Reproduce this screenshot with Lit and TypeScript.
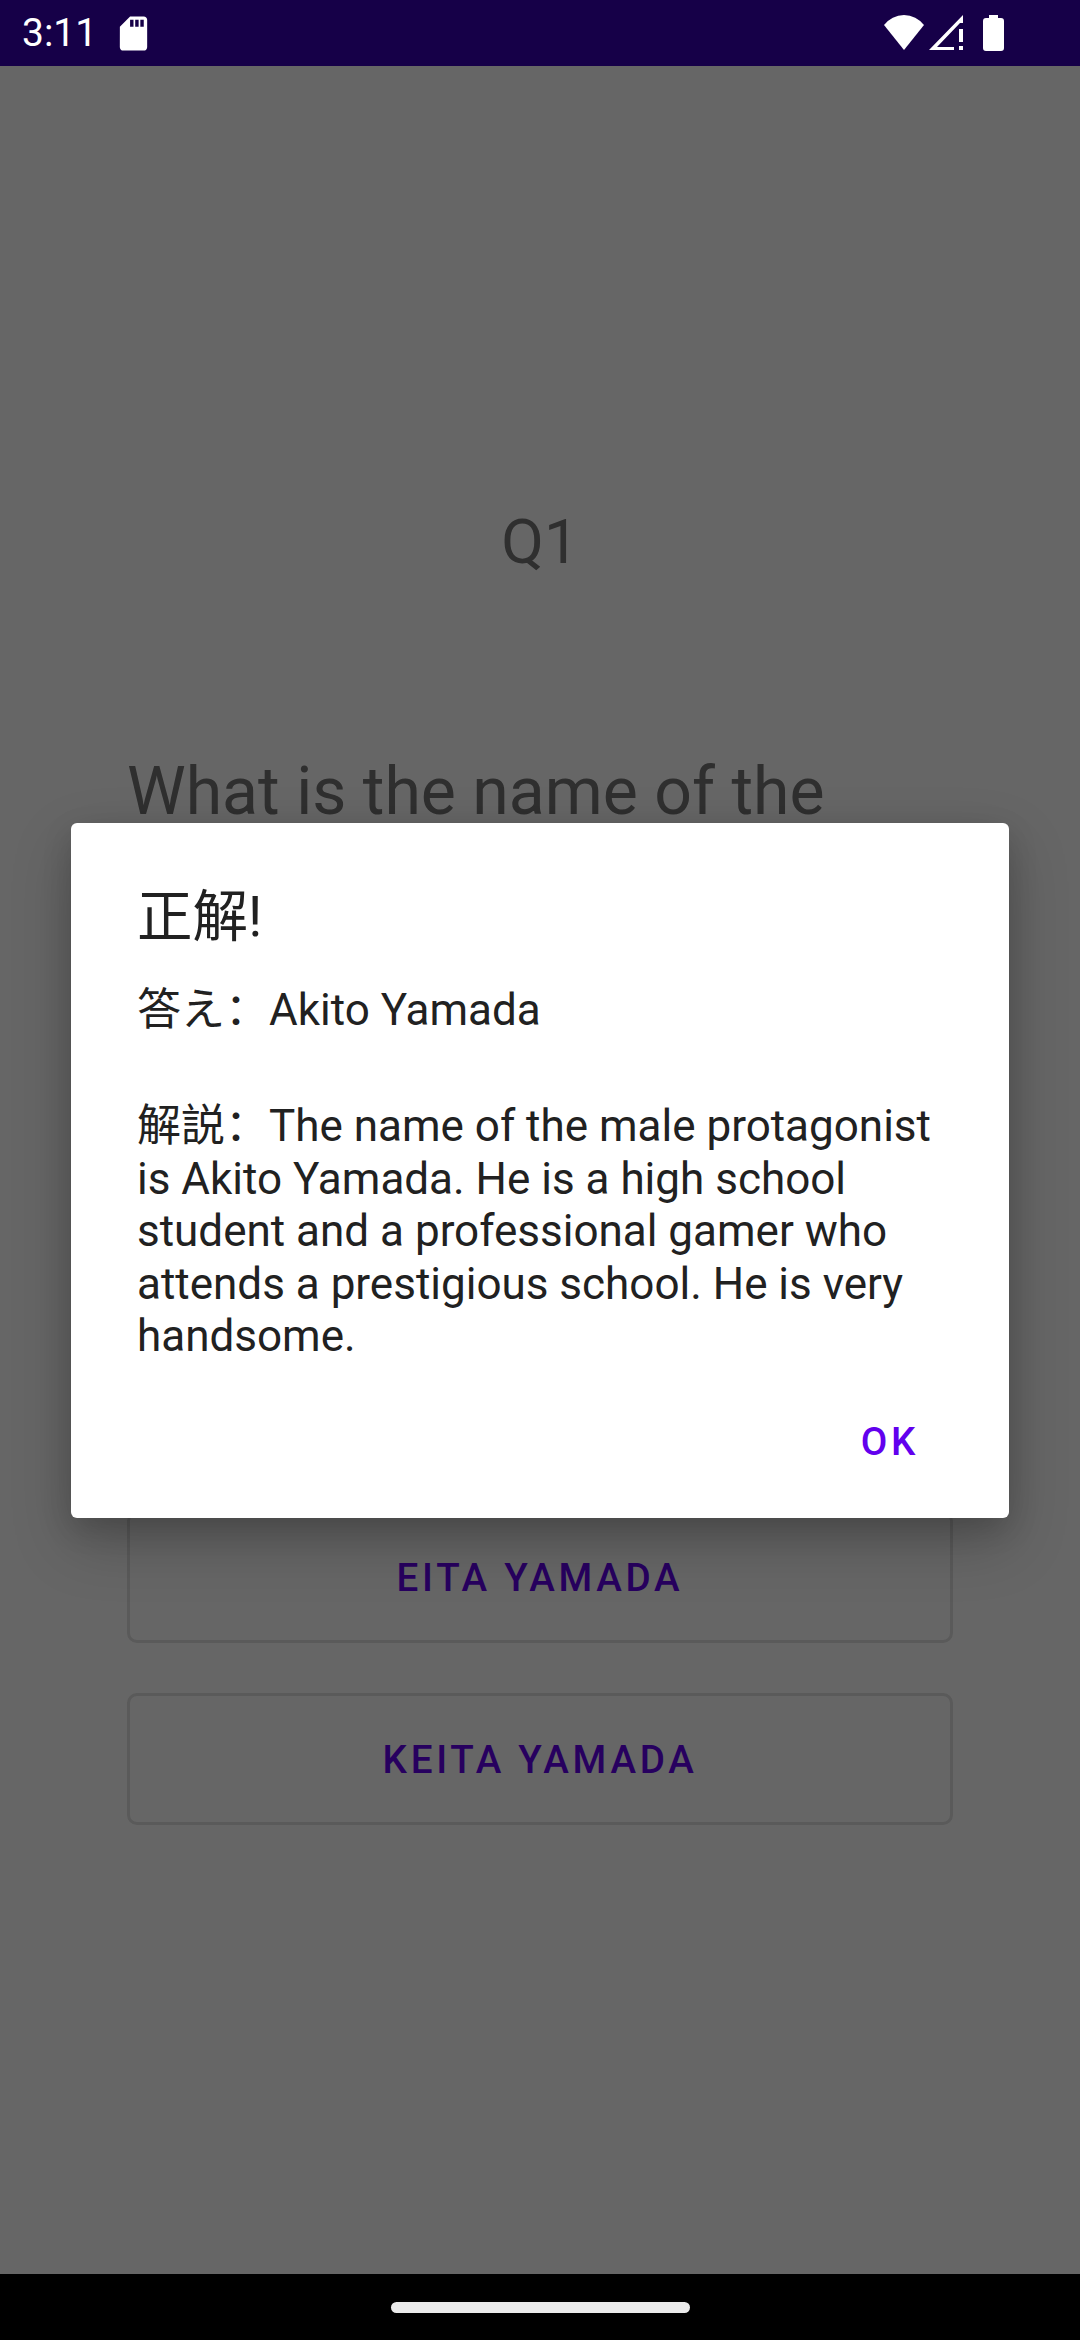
import {LitElement, html, css} from 'lit';
import {customElement} from 'lit/decorators.js';

@customElement('app-root')
export class AppRoot extends LitElement {
  static override styles = css`
    :host {
      display: block;
      font-family: Roboto, 'Noto Sans CJK SC', sans-serif;
    }
    .page {
      display: flex;
      flex-direction: column;
      width: 1080px;
      height: 2340px;
      background: #fff;
      overflow: hidden;
    }
    .status {
      display: flex;
      align-items: center;
      flex: 0 0 66px;
      height: 66px;
      padding: 0 0 0 22px;
      box-sizing: border-box;
      background: #160048;
      color: #fff;
    }
    .time {
      font-size: 39px;
      line-height: 66px;
      width: 91px;
    }
    .icons {
      display: flex;
      align-items: center;
      margin-left: auto;
      margin-right: 76px;
    }
    .status svg {
      display: block;
      fill: #fff;
    }
    .main {
      position: relative;
      flex: 1;
      display: flex;
      flex-direction: column;
      padding: 0 127px;
      min-height: 0;
    }
    .num {
      margin-top: 438px;
      text-align: center;
      font-size: 62px;
      line-height: 76px;
      color: #757575;
    }
    .question {
      margin-top: 166px;
      font-size: 66.15px;
      line-height: 92px;
      color: #757575;
    }
    .choices {
      display: flex;
      flex-direction: column;
      gap: 50px;
      margin-top: 217px;
    }
    .choice {
      display: flex;
      align-items: center;
      justify-content: center;
      height: 132px;
      box-sizing: border-box;
      border: 3px solid #e0e0e0;
      border-radius: 10px;
      font-size: 38.6px;
      font-weight: 500;
      letter-spacing: 3.7px;
      color: #6200ee;
    }
    .scrim {
      position: absolute;
      inset: 0;
      display: flex;
      align-items: center;
      justify-content: center;
      background: rgba(0, 0, 0, 0.6);
    }
    .dialog {
      width: 938px;
      height: 695px;
      box-sizing: border-box;
      padding: 64px 66px 0;
      background: #fff;
      border-radius: 6px;
      box-shadow: 0 24px 60px rgba(0, 0, 0, 0.22), 0 10px 30px rgba(0, 0, 0, 0.14);
      display: flex;
      flex-direction: column;
    }
    .title {
      font-size: 55.5px;
      line-height: 62px;
      color: #212121;
    }
    .answer {
      margin-top: 35px;
    }
    .answer,
    .note {
      font-size: 44px;
      line-height: 52.5px;
      color: #212121;
    }
    .note {
      margin-top: 64px;
    }
    .actions {
      display: flex;
      justify-content: flex-end;
      margin-top: auto;
      padding: 0 24px 54px 0;
    }
    .ok {
      font-size: 38.6px;
      font-weight: 500;
      letter-spacing: 3.7px;
      color: #6200ee;
    }
    .nav {
      display: flex;
      justify-content: center;
      align-items: center;
      flex: 0 0 66px;
      background: #000;
    }
    .pill {
      width: 299px;
      height: 11px;
      border-radius: 6px;
      background: #ebebeb;
    }
  `;

  private choices = ['AKITO YAMADA', 'SOTA YAMADA', 'EITA YAMADA', 'KEITA YAMADA'];

  override render() {
    return html`
      <div class="page">
        <div class="status">
          <span class="time">3:11</span>
          <svg width="41" height="41" viewBox="0 0 24 24">
            <path d="M18 2h-8L4.02 8 4 20c0 1.1.9 2 2 2h12c1.1 0 2-.9 2-2V4c0-1.1-.9-2-2-2zm-6 6h-2V4h2v4zm3 0h-2V4h2v4zm3 0h-2V4h2v4z" />
          </svg>
          <div class="icons">
            <svg width="42" height="36" viewBox="0 0 42 36">
              <path d="M21 35 L1 10 A25 25 0 0 1 41 10 Z" />
            </svg>
            <svg style="margin-left:3px" width="36" height="36" viewBox="0 0 36 36">
              <path d="M35 0V8H32L9 32H26V35H1Z" />
              <rect x="31" y="14" width="4" height="13" />
              <rect x="31" y="31" width="4" height="4" />
            </svg>
            <svg style="margin-left:19px" width="21" height="36" viewBox="0 0 21 36">
              <path d="M6 0H15V3H18C20 3 21 4 21 6V33C21 35 20 36 18 36H3C1 36 0 35 0 33V6C0 4 1 3 3 3H6Z" />
            </svg>
          </div>
        </div>
        <div class="main">
          <div class="num">Q1</div>
          <div class="question">What is the name of the male protagonist?</div>
          <div class="choices">
            ${this.choices.map((c) => html`<div class="choice">${c}</div>`)}
          </div>
          <div class="scrim">
            <div class="dialog">
              <div class="title">正解!</div>
              <div class="answer">答え：Akito Yamada</div>
              <div class="note">解説：The name of the male protagonist is Akito Yamada. He is a high school student and a professional gamer who attends a prestigious school. He is very handsome.</div>
              <div class="actions"><span class="ok">OK</span></div>
            </div>
          </div>
        </div>
        <div class="nav"><div class="pill"></div></div>
      </div>
    `;
  }
}

declare global {
  interface HTMLElementTagNameMap {
    'app-root': AppRoot;
  }
}
